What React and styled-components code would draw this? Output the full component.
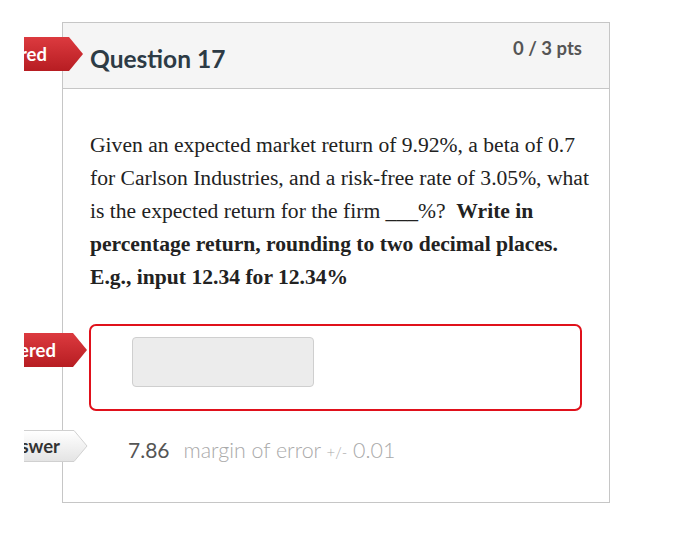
import React from "react";
import styled, { createGlobalStyle, css } from "styled-components";

const Global = createGlobalStyle`
  html, body { margin: 0; padding: 0; background: #fff; }
  body { font-family: Lato, "Liberation Sans", sans-serif; }
`;

const Page = styled.div`
  width: 700px;
  height: 540px;
  padding: 22px 0 0 62px;
  box-sizing: border-box;
`;

const Card = styled.div`
  position: relative;
  width: 548px;
  height: 481px;
  box-sizing: border-box;
  border: 1px solid #c6c6c6;
  background: #fff;
`;

const Header = styled.div`
  display: flex;
  justify-content: space-between;
  align-items: flex-start;
  height: 66px;
  box-sizing: border-box;
  background: #f5f5f5;
  border-bottom: 1px solid #c6c6c6;
  padding: 0 27px 0 27px;
`;

const Title = styled.h2`
  margin: 21px 0 0;
  font-family: Lato, "Liberation Sans", sans-serif;
  font-weight: 700;
  font-size: 24.5px;
  color: #2d3b45;
`;

const Points = styled.div`
  margin-top: 14px;
  font-size: 18.5px;
  font-weight: 700;
  color: #555;
`;

const Body = styled.div`
  padding: 40px 14px 0 27px;
`;

const Prompt = styled.p`
  margin: 0;
  font-family: "Liberation Serif", "Times New Roman", serif;
  font-size: 21.6px;
  line-height: 33px;
  color: #222;
  b { font-weight: 700; }
`;

const AnswerBox = styled.div`
  margin: 30px 13px 0 -1px;
  height: 87px;
  box-sizing: border-box;
  border: 2px solid #e0111b;
  border-radius: 7px;
  padding: 11px 0 0 41px;
`;

const Input = styled.div`
  width: 182px;
  height: 50px;
  box-sizing: border-box;
  background: #ececec;
  border: 1px solid #cfcfcf;
  border-radius: 4px;
`;

const CorrectRow = styled.div`
  display: flex;
  align-items: baseline;
  margin: 26px 0 0 38px;
  font-size: 21px;
  font-weight: 400;
  color: #555;
`;

const Margin = styled.span`
  margin-left: 14px;
  color: #a9a9a9;
  font-size: 21.4px;
  font-weight: 300;
`;

const Small = styled.span`
  font-size: 15px;
`;

const Tag = styled.div`
  position: absolute;
  left: -39px;
  top: ${(p) => p.$top}px;
  display: flex;
  height: ${(p) => p.$h}px;
`;

const TagBox = styled.div`
  width: ${(p) => p.$w}px;
  height: 100%;
  display: flex;
  align-items: center;
  justify-content: flex-end;
  padding-right: ${(p) => p.$pad}px;
  box-sizing: border-box;
  overflow: hidden;
  font-size: 18.5px;
  font-weight: 700;
  white-space: nowrap;
  ${(p) =>
    p.$kind === "red"
      ? css`
          background: linear-gradient(#dc3a3f, #b71d22);
          color: #fff;
        `
      : css`
          background: linear-gradient(#ffffff, #e4e4e4);
          color: #333;
          border-top: 1px solid #d0d0d0;
          border-bottom: 1px solid #d0d0d0;
        `}
`;

const TagText = styled.span`
  flex: none;
`;

const Arrow = styled.svg`
  flex: none;
  width: 14px;
  height: 100%;
`;

function Badge({ top, kind, text, pad, w, h }) {
  return (
    <Tag $top={top} $h={h}>
      <TagBox $kind={kind} $pad={pad} $w={w}>
        <TagText>{text}</TagText>
      </TagBox>
      <Arrow viewBox="0 0 14 34" preserveAspectRatio="none">
        {kind === "red" ? (
          <>
            <defs>
              <linearGradient id="rg" x1="0" y1="0" x2="0" y2="1">
                <stop offset="0" stopColor="#dc3a3f" />
                <stop offset="1" stopColor="#b71d22" />
              </linearGradient>
            </defs>
            <polygon points="0,0 14,17 0,34" fill="url(#rg)" />
          </>
        ) : (
          <>
            <defs>
              <linearGradient id="gg" x1="0" y1="0" x2="0" y2="1">
                <stop offset="0" stopColor="#ffffff" />
                <stop offset="1" stopColor="#e4e4e4" />
              </linearGradient>
            </defs>
            <polygon points="0,0.5 13,17 0,33.5" fill="url(#gg)" />
            <polyline points="0,0.5 13,17 0,33.5" fill="none" stroke="#d0d0d0" strokeWidth="1" />
          </>
        )}
      </Arrow>
    </Tag>
  );
}

export default function App() {
  return (
    <>
      <Global />
      <Page>
        <Card>
          <Badge top={14} h={34} w={45} kind="red" text="Unanswered" pad={22} />
          <Badge top={310} h={34} w={49} kind="red" text="Unanswered" pad={17} />
          <Badge top={407} h={32} w={50} kind="gray" text="Correct Answer" pad={14} />
          <Header>
            <Title>Question 17</Title>
            <Points>0 / 3 pts</Points>
          </Header>
          <Body>
            <Prompt>
              Given an expected market return of 9.92%, a beta of 0.7 for Carlson
              Industries, and a risk-free rate of 3.05%, what is the expected return
              for the firm ___%?&nbsp; <b>Write in percentage return, rounding to two
              decimal places. E.g., input 12.34 for 12.34%</b>
            </Prompt>
            <AnswerBox>
              <Input />
            </AnswerBox>
            <CorrectRow>
              7.86
              <Margin>
                margin of error <Small>+/-</Small> 0.01
              </Margin>
            </CorrectRow>
          </Body>
        </Card>
      </Page>
    </>
  );
}
